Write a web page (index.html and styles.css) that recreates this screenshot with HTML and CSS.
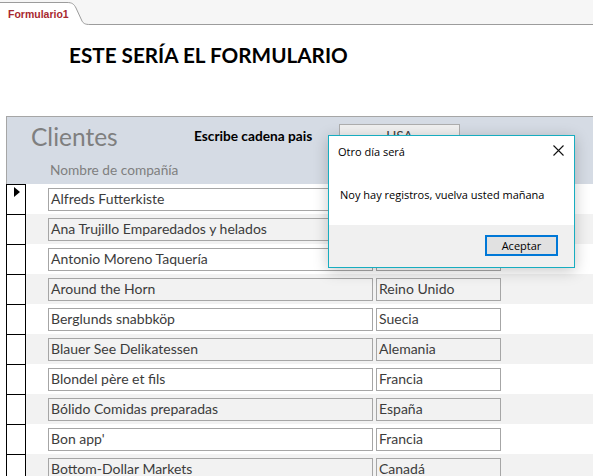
FILE: index.html
```html
<!DOCTYPE html>
<html lang="es">
<head>
<meta charset="utf-8">
<title>Formulario1</title>
<link rel="stylesheet" href="styles.css">
</head>
<body>
<div class="tabbar">
  <div class="tab">
    <svg class="tab-shape" width="90" height="25" viewBox="0 0 90 25">
      <path d="M0,25 V2.5 H67 C72,2.5 74,4 76,8 L82,21 C83.5,23.5 85,24.5 90,24.5 V25 Z" fill="#ffffff"/>
      <path d="M0,2.5 H67 C72,2.5 74,4 76,8 L82,21 C83.5,23.5 85,24.5 90,24.5" fill="none" stroke="#9c9c9c" stroke-width="1"/>
    </svg>
    <span class="tab-label">Formulario1</span>
  </div>
  <div class="tab-rest"></div>
</div>

<h1 class="title">ESTE SERÍA EL FORMULARIO</h1>

<section class="form">
  <div class="form-header">
    <div class="header-top">
      <div class="form-name">Clientes</div>
      <div class="filter-label">Escribe cadena pais</div>
      <div class="filter-btn">USA</div>
    </div>
    <div class="col-label">Nombre de compañía</div>
  </div>

  <div class="row">
    <div class="selector"><span class="arrow"></span></div>
    <div class="box company">Alfreds Futterkiste</div>
    <div class="box country">Alemania</div>
  </div>
  <div class="row alt">
    <div class="selector"></div>
    <div class="box company">Ana Trujillo Emparedados y helados</div>
    <div class="box country">México</div>
  </div>
  <div class="row">
    <div class="selector"></div>
    <div class="box company">Antonio Moreno Taquería</div>
    <div class="box country">México</div>
  </div>
  <div class="row alt">
    <div class="selector"></div>
    <div class="box company">Around the Horn</div>
    <div class="box country">Reino Unido</div>
  </div>
  <div class="row">
    <div class="selector"></div>
    <div class="box company">Berglunds snabbköp</div>
    <div class="box country">Suecia</div>
  </div>
  <div class="row alt">
    <div class="selector"></div>
    <div class="box company">Blauer See Delikatessen</div>
    <div class="box country">Alemania</div>
  </div>
  <div class="row">
    <div class="selector"></div>
    <div class="box company">Blondel père et fils</div>
    <div class="box country">Francia</div>
  </div>
  <div class="row alt">
    <div class="selector"></div>
    <div class="box company">Bólido Comidas preparadas</div>
    <div class="box country">España</div>
  </div>
  <div class="row">
    <div class="selector"></div>
    <div class="box company">Bon app'</div>
    <div class="box country">Francia</div>
  </div>
  <div class="row alt">
    <div class="selector"></div>
    <div class="box company">Bottom-Dollar Markets</div>
    <div class="box country">Canadá</div>
  </div>
</section>

<div class="dialog">
  <div class="dialog-body">
    <div class="dialog-title">
      <span>Otro día será</span>
      <svg class="close" width="11" height="11" viewBox="0 0 11 11">
        <path d="M0.5,0.5 L10.5,10.5 M10.5,0.5 L0.5,10.5" stroke="#111" stroke-width="1.1" fill="none"/>
      </svg>
    </div>
    <div class="dialog-msg">Noy hay registros, vuelva usted mañana</div>
  </div>
  <div class="dialog-footer">
    <div class="dialog-btn">Aceptar</div>
  </div>
</div>
</body>
</html>
```

FILE: styles.css
```css
html, body {
  margin: 0;
  padding: 0;
}
body {
  width: 593px;
  height: 476px;
  overflow: hidden;
  background: #ffffff;
  font-family: "Lato", "Liberation Sans", sans-serif;
  position: relative;
}

/* tab strip */
.tabbar {
  display: flex;
  height: 25px;
  background: #f6f6f6;
}
.tab {
  position: relative;
  width: 90px;
  height: 25px;
  flex: none;
}
.tab-shape {
  position: absolute;
  left: 0;
  top: 0;
}
.tab-label {
  position: relative;
  display: block;
  padding: 8px 0 0 8px;
  font-family: "Liberation Sans", Arial, sans-serif;
  font-weight: bold;
  font-size: 10.5px;
  line-height: 12px;
  color: #a8282f;
}
.tab-rest {
  flex: 1;
  border-bottom: 1px solid #9c9c9c;
  height: 24px;
}

/* title */
.title {
  margin: 18px 0 0 69px;
  font-family: "Lato", sans-serif;
  font-weight: bold;
  font-size: 20.7px;
  line-height: 25px;
  color: #000;
}

/* form */
.form {
  margin: 48px 0 0 6px;
}
.form-header {
  height: 67px;
  background: #d5dbe4;
  border-top: 1px solid #a6a6a6;
  border-left: 1px solid #a6a6a6;
}
.header-top {
  display: flex;
  align-items: flex-start;
  height: 43px;
}
.form-name {
  margin: 5px 0 0 24px;
  width: 163px;
  font-size: 24.5px;
  line-height: 30px;
  color: #7f7f7f;
}
.filter-label {
  margin-top: 10px;
  width: 145px;
  font-weight: bold;
  font-size: 13.7px;
  line-height: 17px;
  color: #000;
}
.filter-btn {
  margin-top: 7px;
  width: 121px;
  height: 24px;
  box-sizing: border-box;
  border: 1px solid #adadad;
  background: #f0f0f0;
  text-align: center;
  font-size: 13.7px;
  line-height: 21px;
  color: #3f3f3f;
}
.col-label {
  margin-left: 43px;
  font-size: 13.7px;
  line-height: 20px;
  color: #7f7f7f;
}

/* rows */
.row {
  display: flex;
  align-items: flex-start;
  height: 30px;
}
.row.alt {
  background: linear-gradient(to right, #ffffff 20px, #f2f2f2 20px);
}
.selector {
  flex: none;
  width: 20px;
  height: 30px;
  box-sizing: border-box;
  border-left: 1px solid #000;
  border-right: 1px solid #000;
  border-top: 1px solid #000;
  background: #fff;
}
.arrow {
  display: block;
  width: 0;
  height: 0;
  margin: 2px 0 0 7px;
  border-left: 6px solid #000;
  border-top: 5px solid transparent;
  border-bottom: 5px solid transparent;
}
.box {
  flex: none;
  margin-top: 4px;
  height: 23px;
  box-sizing: border-box;
  border: 1px solid #a6a6a6;
  background: #ffffff;
  padding: 0 2px;
  font-size: 14px;
  line-height: 20px;
  color: #3c3c3c;
  white-space: nowrap;
  overflow: hidden;
}
.row.alt .box {
  background: #f2f2f2;
}
.company {
  margin-left: 22px;
  width: 325px;
}
.country {
  margin-left: 3px;
  width: 125px;
}

/* message box overlay */
.dialog {
  position: absolute;
  left: 328px;
  top: 135px;
  width: 247px;
  box-sizing: border-box;
  border: 1px solid #17adc0;
  background: #ffffff;
  box-shadow: 0 3px 14px rgba(0, 0, 0, 0.22);
  font-family: "Open Sans", "Noto Sans", sans-serif;
  font-size: 11px;
  color: #000;
}
.dialog-body {
  height: 89px;
}
.dialog-title {
  display: flex;
  justify-content: space-between;
  align-items: flex-start;
  padding: 8px 10px 0 9px;
  line-height: 16px;
}
.close {
  margin-top: 1px;
}
.dialog-msg {
  margin: 27px 0 0 11px;
  line-height: 16px;
}
.dialog-footer {
  height: 42px;
  background: #f0f0f0;
  display: flex;
  justify-content: flex-end;
  align-items: flex-start;
  padding: 10px 16px 0 0;
  box-sizing: border-box;
}
.dialog-btn {
  width: 73px;
  height: 21px;
  box-sizing: border-box;
  border: 2px solid #0078d7;
  background: #e1e1e1;
  text-align: center;
  line-height: 17px;
}
```
